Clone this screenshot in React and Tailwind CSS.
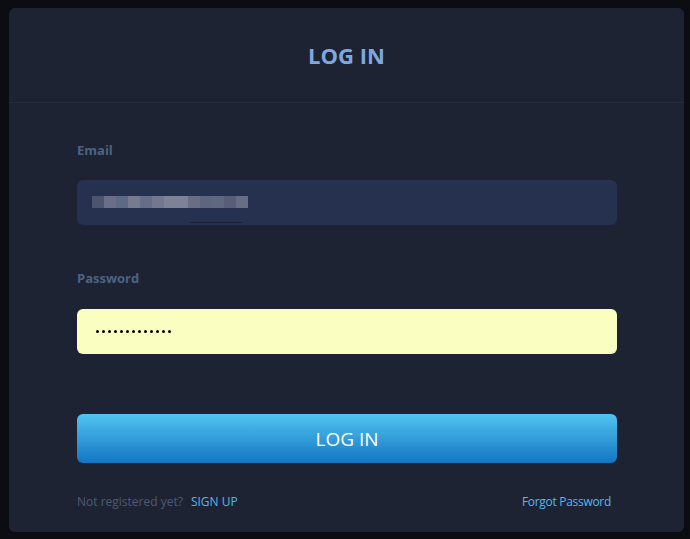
const blur = ['#4c5570', '#6a6e88', '#5e6a85', '#777b90', '#646e88', '#737890', '#7d8297', '#7d8297', '#6a6e85', '#5d6680', '#606780', '#585e78', '#666d85']

export default function App() {
  return (
    <div className="h-[539px] w-[690px] bg-[#0b0d12] pt-[8px] pl-[9px] font-['Open_Sans',sans-serif]">
      <div className="flex h-[524px] w-[675px] flex-col rounded-[6px] bg-[#1e2333]">
        <div className="flex h-[95px] items-center justify-center border-b border-[#262c3c]">
          <h1 className="text-[22px] font-bold text-[#7ea8e2]">LOG IN</h1>
        </div>

        <div className="flex flex-col pl-[68px] pr-[67px] pt-[38px]">
          <label className="text-[13px] font-bold text-[#4d6283]">Email</label>
          <div className="relative mt-[19px] flex h-[45px] items-center rounded-[6px] bg-[#263150] pl-[15px]">
            <div className="flex">
              {blur.map((c, i) => (
                <span key={i} className="h-[12px] w-[12px]" style={{ backgroundColor: c }} />
              ))}
            </div>
            <span className="absolute left-[113px] top-[42px] h-[1px] w-[52px] bg-[#1b2132]" />
          </div>

          <label className="mt-[44px] text-[13px] font-bold text-[#4d6283]">Password</label>
          <div className="mt-[21px] flex h-[45px] items-center gap-[3px] rounded-[6px] bg-[#fafec0] pl-[19px]">
            {Array.from({ length: 13 }).map((_, i) => (
              <span key={i} className="h-[3px] w-[3px] rounded-full bg-black" />
            ))}
          </div>

          <button className="mt-[60px] flex h-[49px] items-center justify-center rounded-[6px] bg-gradient-to-b from-[#52c4f1] to-[#1176c2] pt-[2px] text-[19px] text-white">
            LOG IN
          </button>

          <div className="mt-[30px] flex items-center justify-between pr-[6px] text-[12px]">
            <div className="flex gap-[8px]">
              <span className="text-[#4e5a72]">Not registered yet?</span>
              <span className="text-[#4fb8ef]">SIGN UP</span>
            </div>
            <span className="text-[#4fb8ef] tracking-[-0.3px]">Forgot Password</span>
          </div>
        </div>
      </div>
    </div>
  )
}
